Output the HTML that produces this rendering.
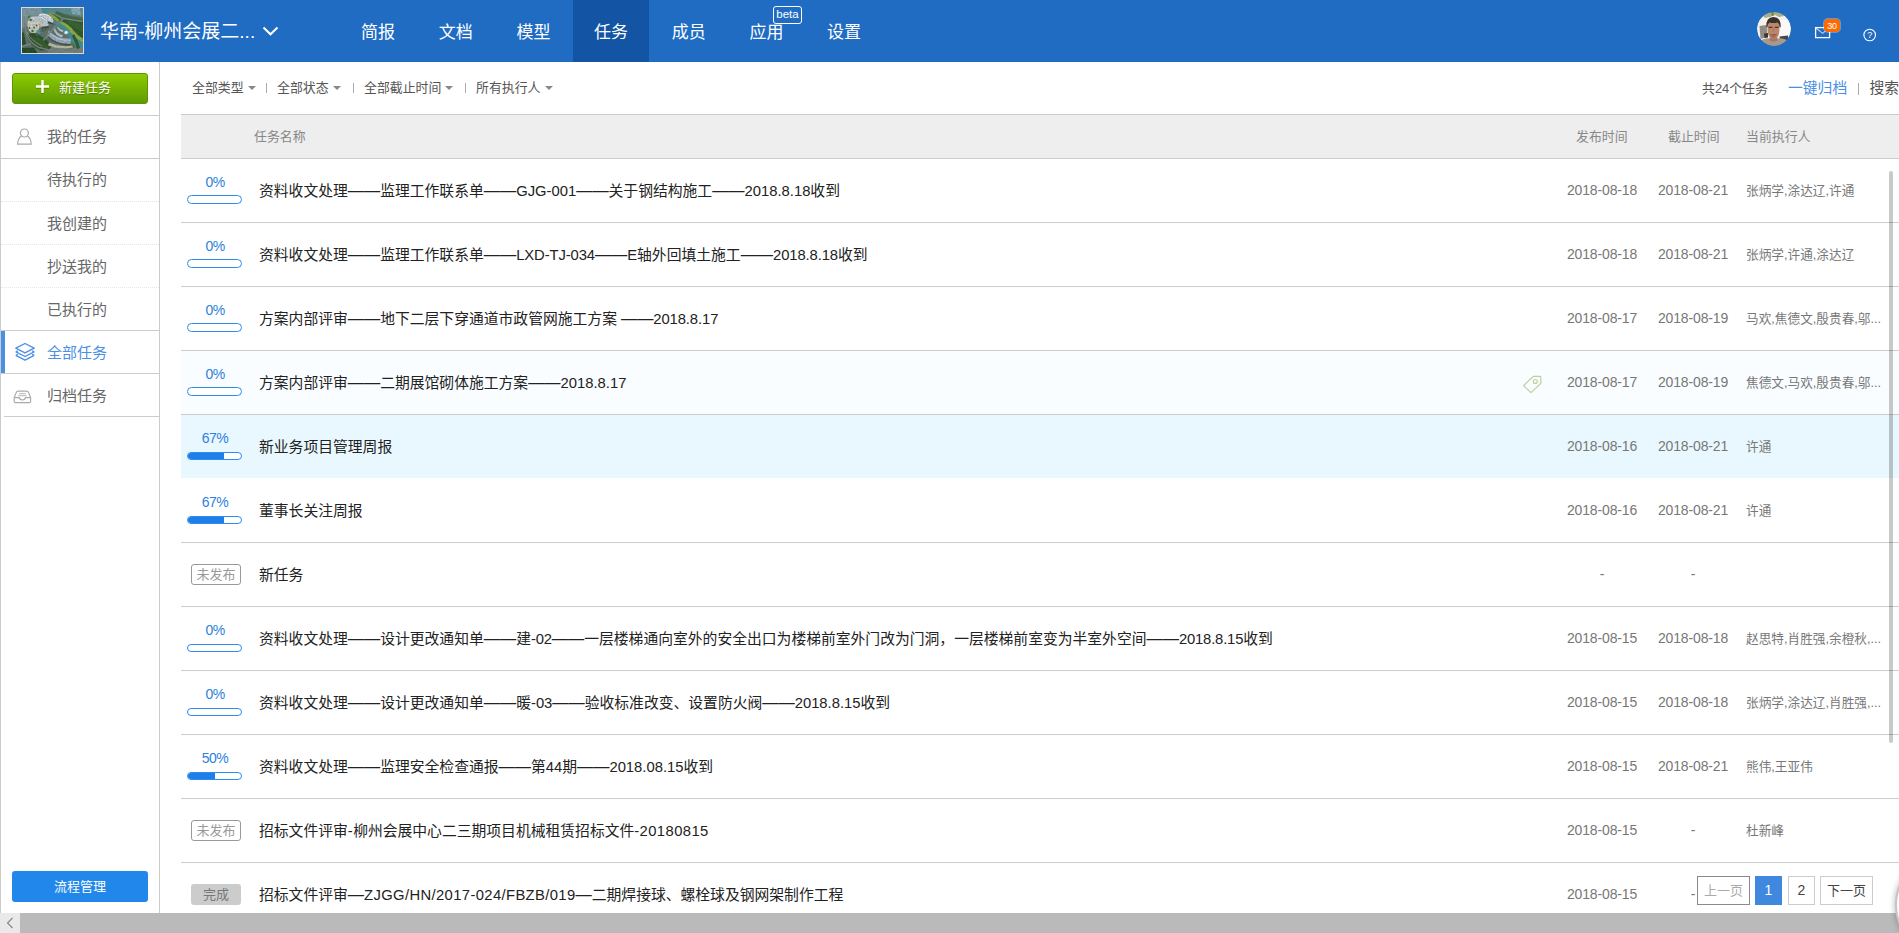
<!DOCTYPE html>
<html lang="zh-CN">
<head>
<meta charset="utf-8">
<title>任务</title>
<style>
*{box-sizing:border-box;margin:0;padding:0}
html,body{width:1899px;height:933px;overflow:hidden;background:#fff}
body{font-family:"Liberation Sans","Noto Sans CJK SC",sans-serif;color:#333;position:relative;font-size:13px}
.abs{position:absolute}
/* header */
#hd{position:absolute;left:0;top:0;width:1899px;height:62px;background:#206cc3}
#logo{position:absolute;left:21px;top:7px;width:63px;height:47px;border:1px solid #ded9cc;overflow:hidden;background:#4d6a4a}
#ttl{position:absolute;left:100px;top:17px;font-size:19px;line-height:30px;color:#fff;white-space:nowrap}
.tab{position:absolute;top:0;height:62px;width:76px;text-align:center;color:#fff;font-size:17px;line-height:65px;white-space:nowrap}
.tab.on{background:#1355a4}
#beta{position:absolute;left:773px;top:6px;width:29px;height:18px;border:1px solid #fff;border-radius:3px;color:#fff;font-size:11.5px;line-height:15px;text-align:center}
#av{position:absolute;left:1757px;top:12px;width:34px;height:34px;border-radius:50%;overflow:hidden}
#bdg{position:absolute;left:1823px;top:18px;width:18px;height:15px;border:1px solid rgba(255,255,255,.3);border-radius:5px;background:#ff6a00;background-clip:padding-box;color:#fff;font-size:9px;line-height:15px;text-align:center;letter-spacing:-.3px}
.pb.t{top:36px;height:9px}
.row.hov{background:#fafdff}
.row.sel{background:#e9f7fe;border-bottom-color:#fff}
/* sidebar */
#sb{position:absolute;left:0;top:62px;width:160px;height:851px;border-left:1px solid #ccc;border-right:1px solid #ccc;background:#fff}
#newbtn{position:absolute;left:12px;top:73px;width:136px;height:31px;border-radius:3px;border:1px solid #5d9400;background:linear-gradient(#8ccb00,#5f9a04);color:#fff;font-size:13px;line-height:28px;text-shadow:0 1px 1px rgba(0,0,0,.3);white-space:nowrap}
.si{position:absolute;left:47px;font-size:15px;line-height:20px;color:#666;white-space:nowrap}
.hl{position:absolute;height:1px;background:#ccc}
.dl{position:absolute;height:1px;left:1px;width:158px;border-top:1px dotted #e6e6e6}
#flow{position:absolute;left:12px;top:871px;width:136px;height:31px;border-radius:3px;background:#2187ea;color:#fff;font-size:13px;line-height:32px;text-align:center}
/* filter */
.ft{position:absolute;top:79px;font-size:12.9px;line-height:18px;color:#555;white-space:nowrap}
.car{position:absolute;top:86px;width:0;height:0;border-left:4px solid transparent;border-right:4px solid transparent;border-top:4px solid #888}
.sep{position:absolute;top:83px;width:1px;height:10px;background:#aaa}
/* table */
#th{position:absolute;left:181px;top:114px;width:1718px;height:45px;background:#eee;border-top:1px solid #ccc;border-bottom:1px solid #ccc}
.th{position:absolute;top:128px;font-size:12.9px;line-height:18px;color:#888;white-space:nowrap}
.row{position:absolute;left:181px;width:1718px;height:64px;border-bottom:1px solid #ccc}
.nm{position:absolute;left:78px;top:21px;font-size:14.8px;line-height:22px;color:#222;white-space:nowrap}
.em{font-size:16.2px;line-height:0}
.la{letter-spacing:var(--ls,0)}
.pc{position:absolute;left:6.5px;top:15px;width:55px;text-align:center;font-size:14px;line-height:16px;color:#2d7fe0;letter-spacing:-.5px}
.pb{position:absolute;left:6px;top:37px;width:55px;height:8px;border:1px solid #2d8cf0;border-radius:4.5px;overflow:hidden;background:#fff}
.pb i{display:block;height:100%;background:#1f7fe6}
.d1,.d2{position:absolute;top:21px;font-size:14px;line-height:20px;color:#777;white-space:nowrap;text-align:center;width:90px;letter-spacing:-.15px}
.d1{left:1376px}.d2{left:1467px}
.ex{position:absolute;left:1565px;top:22px;font-size:12.67px;line-height:20px;color:#777;white-space:nowrap;letter-spacing:0}
.bd{position:absolute;left:10px;top:21px;width:50px;height:21px;border-radius:3px;font-size:13px;line-height:19px;text-align:center;color:#999}
.bd.un{border:1px solid #999;background:#fff}
.bd.dn{background:#ccc;color:#777;line-height:21px}
/* pagination */
.pg{position:absolute;top:876px;height:29px;border:1px solid #ccc;background:#fff;font-size:14px;line-height:27px;text-align:center;color:#444;white-space:nowrap}
</style>
</head>
<body>
<div id="hd">
  <div id="logo"><svg width="61" height="45" viewBox="0 0 61 45" style="display:block">
<defs><filter id="bl" x="-5%" y="-5%" width="110%" height="110%"><feGaussianBlur stdDeviation="0.5"/></filter>
<filter id="nz" x="0" y="0" width="100%" height="100%"><feTurbulence type="fractalNoise" baseFrequency="0.55" numOctaves="2" seed="7"/><feColorMatrix type="matrix" values="0 0 0 0 0.08  0 0 0 0 0.14  0 0 0 0 0.08  0 0 0 1.6 -0.55"/></filter></defs>
<g filter="url(#bl)">
<rect x="-2" y="-2" width="65" height="49" fill="#5e6f69"/>
<rect x="-2" y="-2" width="65" height="8" fill="#588a96"/>
<path d="M-2 -2 L20 -2 L22 4 L14 8 L-2 10Z" fill="#7b98a4"/>
<path d="M18 -2 L30 -2 L27 3 L21 5Z" fill="#3f8c9a"/>
<path d="M30 -2 L62 -2 L62 9 L48 7 L34 2Z" fill="#5a8c92"/>
<path d="M49 0 L58 0 L59 7 L50 6Z" fill="#86aab4"/>
<path d="M-2 8 L14 7 L16 12 L6 17 L-2 22Z" fill="#7c8f94"/>
<path d="M34 3 L48 8 L62 11 L62 13 L46 11 L33 6Z" fill="#3f6645"/>
<path d="M41 11 Q52 10 62 14 L62 31 Q55 27 50 22 Q46 17 41 14Z" fill="#2c5429"/>
<path d="M45 13 Q52 13 60 17 L60 24 Q52 18 45 15Z" fill="#35602e"/>
<path d="M29 6 L34 7 L42 12 L40 15 L31 11Z" fill="#3d6636"/>
<path d="M37 13 Q45 17 50 24 Q55 31 62 34 L62 43 Q53 39 48 31 Q44 23 35 17Z" fill="#3a8f9b"/>
<path d="M38.5 13 Q47 16 52 23 Q57 29 62 31 L62 34.5 Q54 31 49.5 25 Q45 19 37.5 15Z" fill="#93ab3f"/>
<path d="M27 5 Q33 7 37.5 12.5 L35.8 14.2 Q31 9.5 26 7.5Z" fill="#8fa83e"/>
<path d="M31 12 L36 15 L35 17 L30 14Z" fill="#3f939c"/>
<ellipse cx="11.6" cy="17" rx="6.2" ry="8.4" fill="#cfcdc6"/>
<path d="M6 26 Q12 23 21 29.5 Q30 36 32 41.5 L19 42.5 Q8 38 5.5 30Z" fill="#294b26"/>
<path d="M9 29 Q14 28 21 33 Q26 37 27 40 L20 40 Q12 36 9 31Z" fill="#31582b"/>
<path d="M-2 23 L2 25 L4 36 L-2 38Z" fill="#284826"/>
<path d="M-2 40 L12 39.5 L16 46 L-2 46Z" fill="#234420"/>
<path d="M30 38 L62 40 L62 46 L24 46Z" fill="#737f7e"/>
<path d="M40 37 L52 36 L53 40 L41 41Z" fill="#47703f"/>
<path d="M52 26 Q56 32 58 40 L55 41 Q53 33 50 28Z" fill="#2c5329"/>
<path d="M9.5 10.5 Q19 4.5 26.5 14 L26.5 18 L19.5 19 Q16.5 11.5 9.5 12.5Z" fill="#bcc8d3"/>
<path d="M11 10.6 Q19 6 25.5 14" stroke="#e6ecf2" stroke-width="1" fill="none"/>
<path d="M19.5 19 L26.5 18 L27 20 L20 21Z" fill="#40454b"/>
<path d="M16.5 6.2 Q26.5 3.5 31.5 12 L30.5 15 L25.5 13.2 Q22 7.6 16.5 8.2Z" fill="#cad4de"/>
<path d="M17.5 6.6 Q26 4.6 30.8 12" stroke="#eef2f6" stroke-width="0.9" fill="none"/>
<path d="M25.5 13.2 L30.5 15 L31.5 16.6 L26.5 15.4Z" fill="#363b41"/>
<path d="M26.5 22.5 Q35 31.5 48.5 30.5 L49 35.5 Q34 37 25.5 27Z" fill="#9aacc2"/>
<path d="M27.5 24.6 Q36 33 48.6 32.4" stroke="#c2cedc" stroke-width="1" fill="none"/>
<path d="M26.5 28.5 Q35 36.8 49 36 L49 37.2 Q34 38.4 26 29.6Z" fill="#464b51"/>
<path d="M33 20 Q35 26 41 27 L40.4 29.6 Q33 28 31.4 21Z" fill="#b1bfce"/>
<path d="M36 18.6 Q38 22 41.4 22.4 L41 24 Q36.4 23 35 19.2Z" fill="#bfc9d4"/>
<path d="M27 34.5 Q38 39.5 50 37.5 L51 39.5 Q38 42 26 37.4Z" fill="#bdb9a9"/>
<path d="M14 22.5 L17 21.5 L19 25 L16 26.2Z" fill="#5a8fb2"/>
<ellipse cx="44.2" cy="24.6" rx="2.6" ry="2" fill="#76bcc6"/>
<circle cx="44.2" cy="24.6" r="1.4" fill="#fff"/>
<path d="M17.4 13.8 Q19 15.6 18.5 19.4" stroke="#e9b199" stroke-width="1.5" fill="none"/>
<g fill="#3a6531"><circle cx="8.6" cy="12" r="1.2"/><circle cx="12" cy="19.4" r="1"/><circle cx="10.5" cy="23" r="1.2"/><circle cx="14.5" cy="17.4" r="0.9"/><circle cx="21" cy="22.6" r="1.2"/><circle cx="24" cy="21.4" r="1"/><circle cx="15" cy="26.8" r="1.4"/><circle cx="22.5" cy="30" r="0.9"/><circle cx="26" cy="32" r="1"/><circle cx="7" cy="9" r="1"/><circle cx="7.4" cy="20" r="0.9"/></g>
<path d="M27 3 L41 10.5 L60 13.5" stroke="#7f8b8e" stroke-width="1.3" fill="none"/>
<path d="M41 10.5 L31 21 L21 32.5" stroke="#798486" stroke-width="1.4" fill="none"/>
<path d="M3 14 Q2.5 33 17 39.5 Q36 45 61 43" stroke="#76827f" stroke-width="1.6" fill="none"/>
<path d="M-1 39 L9 35.5" stroke="#838e8c" stroke-width="1.1" fill="none"/>
<path d="M5 24 Q8 32 20 38" stroke="#8e9896" stroke-width="0.8" fill="none"/>
</g>
<rect x="0" y="0" width="61" height="45" filter="url(#nz)" opacity=".5"/>
</svg></div>
  <div id="ttl">华南-柳州会展二...</div>
  <svg class="abs" style="left:262px;top:26px" width="17" height="11" viewBox="0 0 17 11"><path d="M1.5 1.5 L8.5 8.3 L15.5 1.5" fill="none" stroke="#fff" stroke-width="2"/></svg>
  <div class="tab" style="left:340px">简报</div>
  <div class="tab" style="left:417.7px">文档</div>
  <div class="tab" style="left:495.4px">模型</div>
  <div class="tab on" style="left:573px">任务</div>
  <div class="tab" style="left:650.7px">成员</div>
  <div class="tab" style="left:728.4px">应用</div>
  <div class="tab" style="left:806px">设置</div>
  <div id="beta">beta</div>
  <div id="av"><svg width="34" height="34" viewBox="0 0 34 34" style="display:block">
  <defs><filter id="bl2" x="-5%" y="-5%" width="110%" height="110%"><feGaussianBlur stdDeviation="0.55"/></filter><clipPath id="cc"><circle cx="17" cy="17" r="17"/></clipPath></defs>
  <g clip-path="url(#cc)"><g filter="url(#bl2)">
  <rect x="-2" y="-2" width="38" height="38" fill="#f4f0ec"/>
  <rect x="22" y="8" width="14" height="16" fill="#fbfaf9"/>
  <path d="M5 3 L12 0 L26 0 L27 4 L22 5 L18 3 L13 5 L8 6Z" fill="#a9ad8c"/>
  <path d="M14 0 L17 0 L16.5 4 L15 4Z" fill="#6f8a4e"/>
  <path d="M2.5 14 L9.5 13 L10.5 25 L3.5 27Z" fill="#8f8c86"/>
  <path d="M7 21.5 L11 21 L11 25.5 L7.5 26Z" fill="#3a3836"/>
  <path d="M22.5 24.5 L31 23.5 L31 28 L23 28.5Z" fill="#45444a"/>
  <path d="M1 30 Q8 25.5 13 26.5 L20 26.5 Q27 25.5 33 30 L34 36 L0 36Z" fill="#a89a8b"/>
  <path d="M13 24 L20 24 L20.5 28.5 Q16.5 30.5 12.5 28.5Z" fill="#a87660"/>
  <path d="M10.4 14 Q10.2 10 16.5 9.6 Q22.8 10 22.6 14 L22.4 19 Q22 24 19.5 26 Q16.5 27.6 13.5 26 Q11 24 10.6 19Z" fill="#bb866c"/>
  <path d="M12.6 21.6 Q16.5 24.4 20.4 21.6 Q20 25 16.5 26.2 Q13 25 12.6 21.6Z" fill="#a46c58"/>
  <path d="M9.3 15.4 Q8.6 5.2 16.5 5 Q24.4 5.2 23.6 15.4 L22.6 15 Q22.6 11.4 20.4 10.4 Q16.5 11.6 12.6 10.4 Q10.4 11.4 10.4 15Z" fill="#38312b"/>
  <path d="M11.6 15.4 H15.4 M17.8 15.4 H21.6" stroke="#4e382f" stroke-width="1.1"/>
  <path d="M14.4 22.6 H18.8" stroke="#8a5145" stroke-width="0.9"/>
  <path d="M16.4 16.5 L16.1 19.6" stroke="#9d6a55" stroke-width="0.9"/>
  </g></g></svg></div>
  <svg class="abs" style="left:1814px;top:26px" width="18" height="14" viewBox="0 0 18 14"><rect x="1.6" y="1.6" width="14" height="10" fill="none" stroke="#fff" stroke-width="1.3"/><path d="M2 2 L8.6 7.4 L15.2 2" fill="none" stroke="#fff" stroke-opacity=".7" stroke-width="1.1"/></svg>
  <div id="bdg">30</div>
  <svg class="abs" style="left:1862px;top:27px" width="16" height="16" viewBox="0 0 16 16"><circle cx="7.7" cy="8" r="5.8" fill="none" stroke="#fff" stroke-width="1.1"/><text x="7.7" y="11.2" font-size="9" text-anchor="middle" fill="#fff" font-family="Liberation Sans, sans-serif">?</text></svg>

</div>

<div id="sb"></div>
<div id="newbtn"><svg class="abs" style="left:22.4px;top:5.2px;filter:drop-shadow(0 1px 0.5px rgba(0,0,0,.25))" width="15" height="15" viewBox="0 0 15 15"><path d="M7.5 1 V14 M1 7.5 H14" stroke="#fff" stroke-width="2.4" fill="none"/></svg><span class="abs" style="left:46px;top:0">新建任务</span></div>
<div id="flow">流程管理</div>

<div class="hl" style="left:1px;top:115px;width:158px"></div>
<div class="hl" style="left:1px;top:158px;width:158px"></div>
<div class="dl" style="top:201px"></div>
<div class="dl" style="top:244px"></div>
<div class="dl" style="top:287px"></div>
<div class="hl" style="left:1px;top:330px;width:158px"></div>
<div class="hl" style="left:1px;top:373px;width:158px"></div>
<div class="hl" style="left:4px;top:416px;width:155px"></div>
<div class="abs" style="left:1px;top:331px;width:4px;height:42px;background:#4a8fe6"></div>

<svg class="abs" style="left:16px;top:128px" width="18" height="18" viewBox="0 0 18 18"><circle cx="8.4" cy="5" r="4" fill="none" stroke="#aaa" stroke-width="1.2"/><path d="M5.6 8 Q1.8 10 1.6 16.2 H15.2 Q15 10 11.2 8" fill="none" stroke="#aaa" stroke-width="1.2"/></svg>
<svg class="abs" style="left:14px;top:342px" width="22" height="20" viewBox="0 0 22 20"><g fill="none" stroke="#4a8fe6" stroke-width="1.3" stroke-linejoin="round"><path d="M11 1.5 L20.2 6.2 L11 10.9 L1.8 6.2Z"/><path d="M1.8 9.8 L11 14.5 L20.2 9.8 M3.8 8.8 L1.8 9.8 M18.2 8.8 L20.2 9.8"/><path d="M1.8 13.4 L11 18.1 L20.2 13.4 M3.8 12.4 L1.8 13.4 M18.2 12.4 L20.2 13.4"/></g></svg>
<svg class="abs" style="left:13px;top:390px" width="20" height="14" viewBox="0 0 20 14"><g fill="none" stroke="#aaa" stroke-width="1.2" stroke-linejoin="round"><path d="M5.2 1.2 H13.6 Q15 1.2 15.6 2.6 L17.6 7.6 V11.4 Q17.6 12.6 16.4 12.6 H2.4 Q1.2 12.6 1.2 11.4 V7.6 L3.2 2.6 Q3.8 1.2 5.2 1.2Z"/><path d="M1.4 7.6 H6.4 Q6.4 10 9.4 10 Q12.4 10 12.4 7.6 H17.4"/><path d="M6 3.6 H12.8 M5.2 5.6 H13.6" stroke="#c4c4c4"/></g></svg>
<div class="si" style="top:127px">我的任务</div>
<div class="si" style="top:170px">待执行的</div>
<div class="si" style="top:214px">我创建的</div>
<div class="si" style="top:257px">抄送我的</div>
<div class="si" style="top:300px">已执行的</div>
<div class="si" style="top:343px;color:#4a8fe6">全部任务</div>
<div class="si" style="top:386px">归档任务</div>

<div class="ft" style="left:192px">全部类型</div><div class="car" style="left:248px"></div><div class="sep" style="left:266px"></div>
<div class="ft" style="left:277px">全部状态</div><div class="car" style="left:333px"></div><div class="sep" style="left:353px"></div>
<div class="ft" style="left:364px">全部截止时间</div><div class="car" style="left:445px"></div><div class="sep" style="left:465px"></div>
<div class="ft" style="left:476px">所有执行人</div><div class="car" style="left:545px"></div>
<div class="ft" style="left:1702px;top:80px">共24个任务</div>
<div class="ft" style="left:1788px;top:78px;font-size:14.8px;line-height:20px;color:#4a8fe6">一键归档</div><div class="sep" style="left:1858px;height:12px"></div>
<div class="ft" style="left:1869.5px;top:78px;font-size:14.8px;line-height:20px">搜索</div>
<div id="th"></div>
<div class="th" style="left:254px">任务名称</div>
<div class="th" style="left:1576px">发布时间</div>
<div class="th" style="left:1668px">截止时间</div>
<div class="th" style="left:1746px">当前执行人</div>
<div class="row " style="top:159px"><div class="pc">0%</div><div class="pb t"><i style="width:0%"></i></div><div class="nm">资料收文处理<span class="em">——</span>监理工作联系单<span class="em">——</span><span class="la">GJG-001</span><span class="em">——</span>关于钢结构施工<span class="em">——</span><span class="la">2018.8.18</span>收到</div><div class="d1">2018-08-18</div><div class="d2">2018-08-21</div><div class="ex">张炳学,涂达辽,许通</div></div>
<div class="row " style="top:223px"><div class="pc">0%</div><div class="pb t"><i style="width:0%"></i></div><div class="nm" style="--ls:-0.1px">资料收文处理<span class="em">——</span>监理工作联系单<span class="em">——</span><span class="la">LXD-TJ-034</span><span class="em">——</span><span class="la">E</span>轴外回填土施工<span class="em">——</span><span class="la">2018.8.18</span>收到</div><div class="d1">2018-08-18</div><div class="d2">2018-08-21</div><div class="ex">张炳学,许通,涂达辽</div></div>
<div class="row " style="top:287px"><div class="pc">0%</div><div class="pb t"><i style="width:0%"></i></div><div class="nm" style="--ls:-0.1px">方案内部评审<span class="em">——</span>地下二层下穿通道市政管网施工方案<span class="la"> </span><span class="em">——</span><span class="la">2018.8.17</span></div><div class="d1">2018-08-17</div><div class="d2">2018-08-19</div><div class="ex">马欢,焦德文,殷贵春,邬...</div></div>
<div class="row hov" style="top:351px"><div class="pc">0%</div><div class="pb t"><i style="width:0%"></i></div><div class="nm">方案内部评审<span class="em">——</span>二期展馆砌体施工方案<span class="em">——</span><span class="la">2018.8.17</span></div><div class="d1">2018-08-17</div><div class="d2">2018-08-19</div><div class="ex">焦德文,马欢,殷贵春,邬...</div></div>
<div class="row sel" style="top:415px"><div class="pc">67%</div><div class="pb"><i style="width:67%"></i></div><div class="nm">新业务项目管理周报</div><div class="d1">2018-08-16</div><div class="d2">2018-08-21</div><div class="ex">许通</div></div>
<div class="row " style="top:479px"><div class="pc">67%</div><div class="pb"><i style="width:67%"></i></div><div class="nm">董事长关注周报</div><div class="d1">2018-08-16</div><div class="d2">2018-08-21</div><div class="ex">许通</div></div>
<div class="row " style="top:543px"><div class="bd un">未发布</div><div class="nm">新任务</div><div class="d1">-</div><div class="d2">-</div><div class="ex"></div></div>
<div class="row " style="top:607px"><div class="pc">0%</div><div class="pb"><i style="width:0%"></i></div><div class="nm" style="--ls:-0.17px">资料收文处理<span class="em">——</span>设计更改通知单<span class="em">——</span>建<span class="la">-02</span><span class="em">——</span>一层楼梯通向室外的安全出口为楼梯前室外门改为门洞，一层楼梯前室变为半室外空间<span class="em">——</span><span class="la">2018.8.15</span>收到</div><div class="d1">2018-08-15</div><div class="d2">2018-08-18</div><div class="ex">赵思特,肖胜强,余橙秋,...</div></div>
<div class="row " style="top:671px"><div class="pc">0%</div><div class="pb"><i style="width:0%"></i></div><div class="nm">资料收文处理<span class="em">——</span>设计更改通知单<span class="em">——</span>暖<span class="la">-03</span><span class="em">——</span>验收标准改变、设置防火阀<span class="em">——</span><span class="la">2018.8.15</span>收到</div><div class="d1">2018-08-15</div><div class="d2">2018-08-18</div><div class="ex">张炳学,涂达辽,肖胜强,...</div></div>
<div class="row " style="top:735px"><div class="pc">50%</div><div class="pb"><i style="width:50%"></i></div><div class="nm">资料收文处理<span class="em">——</span>监理安全检查通报<span class="em">——</span>第<span class="la">44</span>期<span class="em">——</span><span class="la">2018.08.15</span>收到</div><div class="d1">2018-08-15</div><div class="d2">2018-08-21</div><div class="ex">熊伟,王亚伟</div></div>
<div class="row " style="top:799px"><div class="bd un">未发布</div><div class="nm" style="--ls:0.4px">招标文件评审<span class="la">-</span>柳州会展中心二三期项目机械租赁招标文件<span class="la">-20180815</span></div><div class="d1">2018-08-15</div><div class="d2">-</div><div class="ex">杜新峰</div></div>
<div class="row " style="top:863px"><div class="bd dn">完成</div><div class="nm" style="--ls:0.37px">招标文件评审<span class="em">—</span><span class="la">ZJGG/HN/2017-024/FBZB/019</span><span class="em">—</span>二期焊接球、螺栓球及钢网架制作工程</div><div class="d1">2018-08-15</div><div class="d2">-</div><div class="ex"></div></div>
<svg class="abs" style="left:1522px;top:374px" width="21" height="21" viewBox="0 0 21 21"><path d="M11.2 2.4 H18 Q18.8 2.4 18.8 3.2 V9.4 L9 18.6 L1.6 11.6Z" fill="none" stroke="#bccf96" stroke-width="1.2" stroke-linejoin="round"/><circle cx="13.3" cy="7.5" r="2" fill="none" stroke="#bccf96" stroke-width="1.1"/></svg>
<div class="pg" style="left:1697px;width:53px;color:#aaa;border-color:#8a8a8a;font-size:13px">上一页</div>
<div class="pg" style="left:1755px;width:27px;background:#3f88de;border-color:#3f88de;color:#fff">1</div>
<div class="pg" style="left:1788px;width:27px">2</div>
<div class="pg" style="left:1820px;width:53px;font-size:13px">下一页</div>
<div class="abs" style="left:1889px;top:171px;width:4px;height:572px;background:rgba(0,0,0,.21);border-radius:2px"></div>
<div class="abs" style="left:0;top:913px;width:1899px;height:20px;background:#bababa"></div>
<div class="abs" style="left:0;top:913px;width:20px;height:20px;background:#e9e9e9"></div>
<div class="abs" style="left:1895px;top:855px;width:100px;height:100px;border-radius:50%;background:#fff;border:2px solid #c4c4c4;box-shadow:0 0 6px rgba(0,0,0,.3)"></div>
<svg class="abs" style="left:6px;top:917px" width="8" height="12" viewBox="0 0 8 12"><path d="M6.5 1 L1.5 6 L6.5 11" fill="none" stroke="#858585" stroke-width="1.1"/></svg>


</body>
</html>
